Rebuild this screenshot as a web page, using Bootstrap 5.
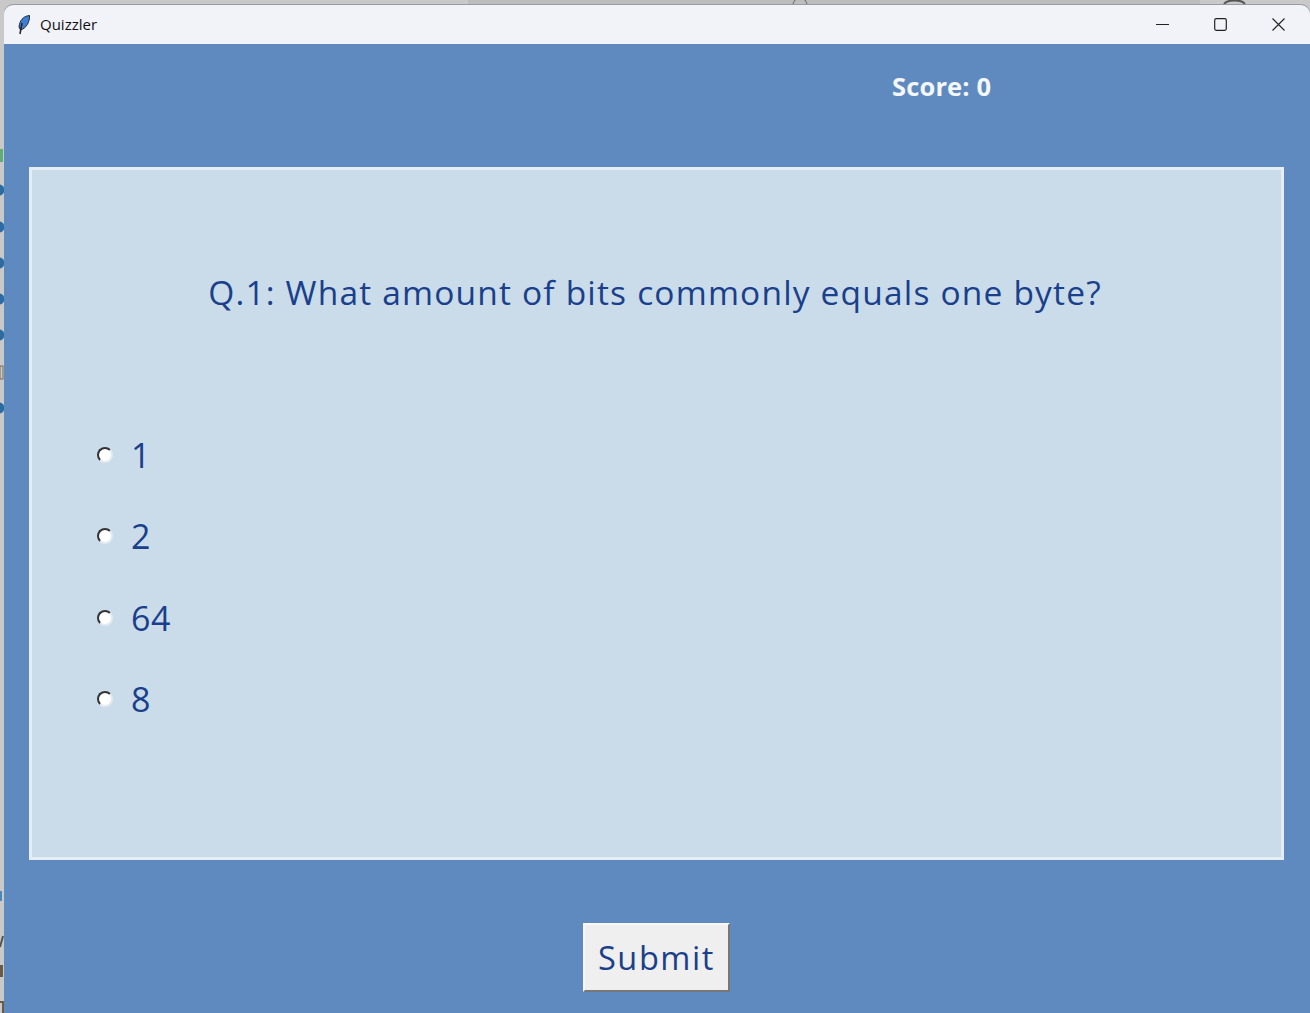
<!DOCTYPE html>
<html lang="en"><head><meta charset="utf-8"><title>Quizzler</title>
<link href="https://cdn.jsdelivr.net/npm/bootstrap@5.3.0/dist/css/bootstrap.min.css" rel="stylesheet">
<style>
html,body{height:1013px;overflow:hidden;background:#c9c9c9}
.desk-top{display:block;height:5px;width:1310px}
.desk-side{display:block;flex:0 0 4px;width:4px;height:1008px}
.app-win{width:1306px;height:1008px;background:#5f8ac0;border-top-left-radius:9px;border-top-right-radius:9px;overflow:hidden;box-shadow:0 -1px 0 #9b9b9b}
.win-bar{height:39px;background:#f1f3f9;font:15px "Open Sans","Liberation Sans",sans-serif;color:#111;padding-left:13px;padding-right:3px}
.win-name{margin-left:9px;margin-bottom:2px}
.win-ctl{width:58px;height:39px}
.score-row{height:123px;padding-left:888px;padding-top:24px;color:#f4f7fb;font:700 25.500px/37px "Open Sans",sans-serif;letter-spacing:.15px}
.quiz-panel{margin-left:25px;width:1255px;height:693px;background:#cadcea;border:3px solid #e6edf3;color:#1a3f8c;font-family:"Open Sans",sans-serif}
.q-text{padding-top:99px;padding-right:3px;height:262px;font-size:33.5px;line-height:46px;letter-spacing:1.18px;margin-bottom:0;text-align:center}
.opt-list{padding-left:65px;gap:35.3px}
.opt-item{height:46px;font-size:34px;line-height:46px;letter-spacing:.6px}
.opt-item .form-check-input{appearance:none;width:16px;height:16px;margin:0 18px 0 0;float:none;background:#fff;border:2px solid;border-color:#333 #e3eaf0 #e3eaf0 #333;border-radius:50%;flex:none}
.foot-row{height:152px;padding-top:63px;padding-right:1px}
.sub-btn{width:147px;height:69px;padding:2px 0 0;background:#efefef;color:#1a3f8c;font:32.500px/1 "Open Sans",sans-serif;letter-spacing:1.6px;border:2px solid;border-color:#f8f8f8 #777 #777 #f8f8f8;border-radius:0}
.sub-btn:hover{background:#efefef;color:#1a3f8c;border-color:#f8f8f8 #777 #777 #f8f8f8}
</style></head>
<body class="m-0">
<svg class="desk-top" viewBox="0 0 1310 5" aria-hidden="true"><rect x="468" width="732" height="5" fill="#bdbdbd"/><path d="M793 5a7 7 0 0 1 14 0" fill="none" stroke="#666"/><path d="M1224 5c1-6 20-6 21 0" fill="none" stroke="#555" stroke-width="2"/></svg>
<div class="d-flex">
<svg class="desk-side" viewBox="0 0 4 1008" aria-hidden="true"><rect y="144" width="3" height="13" fill="#5fae78"/><g fill="#2d6ca3"><circle cx="-1" cy="185" r="5.500"/><circle cx="-1" cy="222" r="5.500"/><circle cx="-1" cy="258" r="5.500"/><circle cx="-1" cy="294" r="5.500"/><circle cx="-1" cy="330" r="5.500"/><circle cx="-1" cy="403" r="5.500"/></g><rect y="361" width="3" height="13" fill="none" stroke="#7a6a58"/><rect y="886" width="2" height="10" fill="#4b88b8"/><path d="M0 942l3-11" stroke="#555" stroke-width="2"/><rect y="960" width="3" height="12" fill="#6a5a48"/><path d="M0 997h3v11" fill="none" stroke="#6a5a48" stroke-width="2"/></svg>
<main class="app-win">
<header class="win-bar d-flex align-items-center">
<svg width="14" height="20" viewBox="0 0 14 20" aria-hidden="true"><path d="M12.500 .5C6 1 2.500 6 2 12L3.500 15C9 13.500 13 7 12.500 .5Z" fill="#3f7fcf" stroke="#1d2b44"/><path d="M5 8L3 19" stroke="#222" stroke-width="1.500"/></svg>
<span class="win-name">Quizzler</span>
<div class="ms-auto d-flex">
<div class="win-ctl d-flex align-items-center justify-content-center"><svg width="13" height="13" viewBox="0 0 13 13" aria-hidden="true"><path d="M0 6.500h13" stroke="#222"/></svg></div>
<div class="win-ctl d-flex align-items-center justify-content-center"><svg width="13" height="13" viewBox="0 0 13 13" aria-hidden="true"><rect x=".7" y=".7" width="11.600" height="11.600" rx="1.500" fill="none" stroke="#222" stroke-width="1.200"/></svg></div>
<div class="win-ctl d-flex align-items-center justify-content-center"><svg width="13" height="13" viewBox="0 0 13 13" aria-hidden="true"><path d="M.5.500l12 12M12.500.5l-12 12" stroke="#222" stroke-width="1.100"/></svg></div>
</div>
</header>
<div class="score-row">Score: 0</div>
<section class="quiz-panel">
<p class="q-text">Q.1: What amount of bits commonly equals one byte?</p>
<div class="opt-list d-flex flex-column">
<label class="opt-item d-flex align-items-center"><input class="form-check-input" type="radio" name="a">1</label>
<label class="opt-item d-flex align-items-center"><input class="form-check-input" type="radio" name="a">2</label>
<label class="opt-item d-flex align-items-center"><input class="form-check-input" type="radio" name="a">64</label>
<label class="opt-item d-flex align-items-center"><input class="form-check-input" type="radio" name="a">8</label>
</div>
</section>
<div class="foot-row d-flex justify-content-center"><button class="btn sub-btn" type="button">Submit</button></div>
</main>
</div>
<script src="https://cdn.jsdelivr.net/npm/bootstrap@5.3.0/dist/js/bootstrap.bundle.min.js"></script>
</body></html>
